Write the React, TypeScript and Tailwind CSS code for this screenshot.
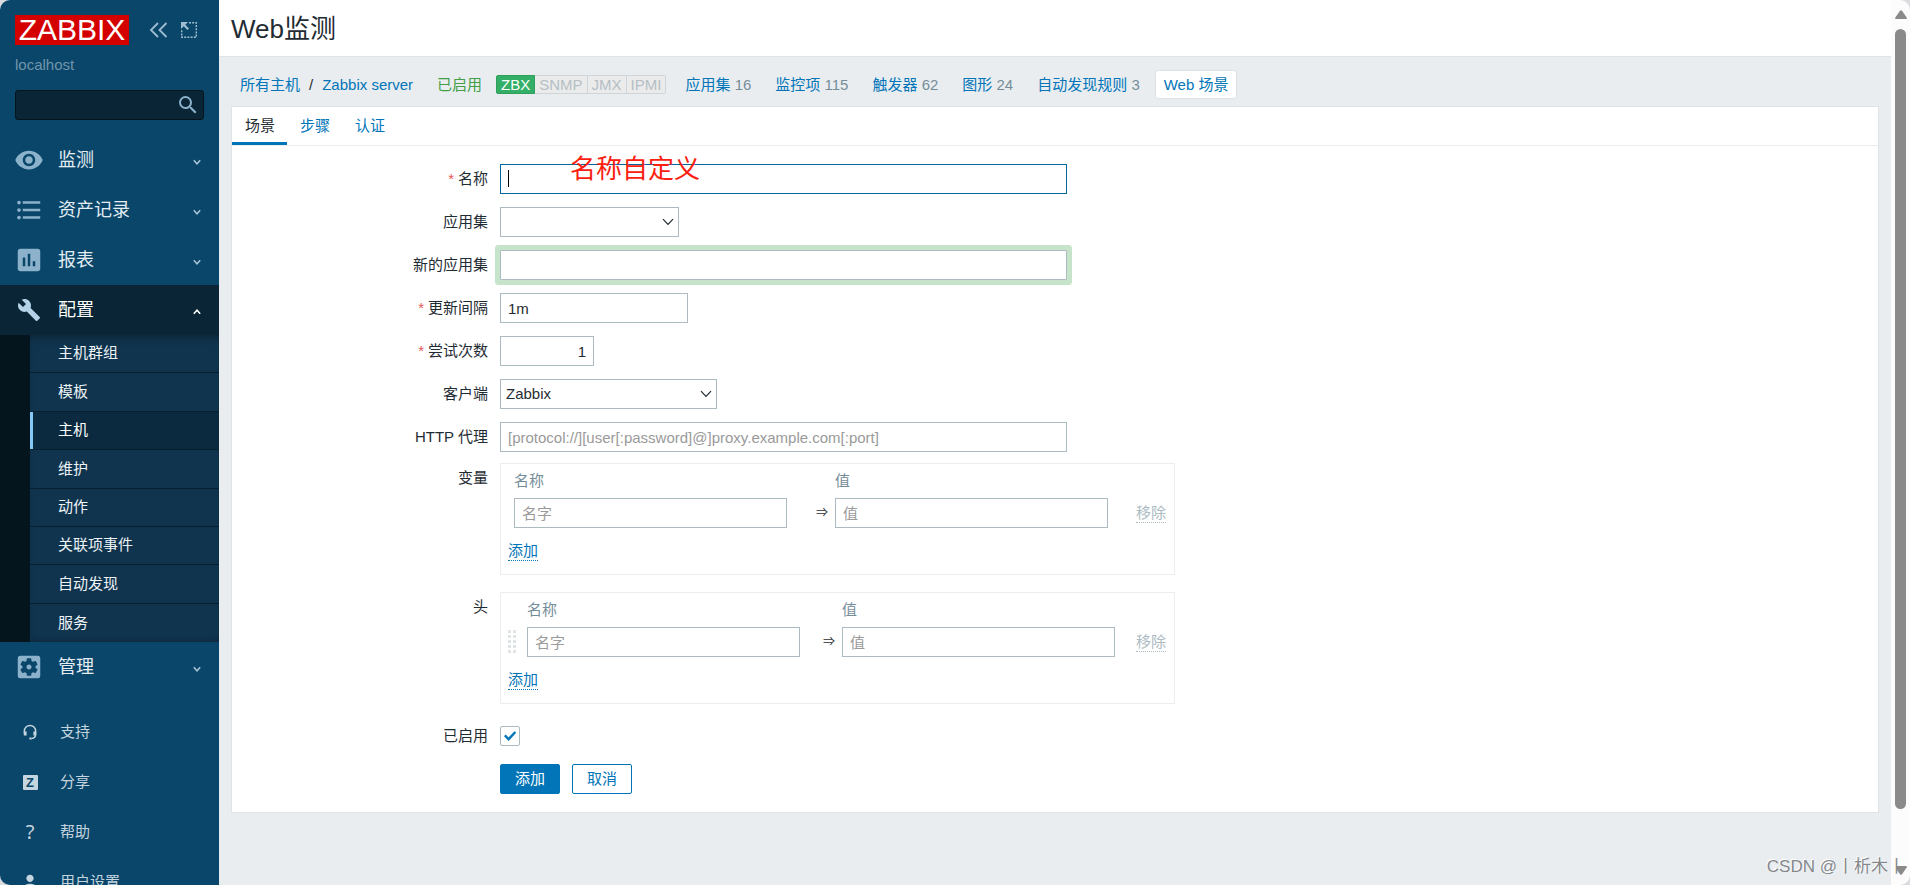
import React from "react";
import {
  MdBuild,
  MdFormatListBulleted,
  MdInsertChart,
  MdPerson,
  MdSearch,
  MdSettingsApplications,
  MdVisibility,
} from "react-icons/md";

const mainMenu = [
  { label: "监测", icon: MdVisibility },
  { label: "资产记录", icon: MdFormatListBulleted },
  { label: "报表", icon: MdInsertChart },
];

const configMenu = [
  "主机群组",
  "模板",
  "主机",
  "维护",
  "动作",
  "关联项事件",
  "自动发现",
  "服务",
];

const hostLinks = [
  { label: "应用集", count: 16 },
  { label: "监控项", count: 115 },
  { label: "触发器", count: 62 },
  { label: "图形", count: 24 },
  { label: "自动发现规则", count: 3 },
];

const inputClass =
  "block h-[30px] border border-[#acbbc2] bg-white px-[7px] text-[15px] text-[#1f2c33] outline-none placeholder:text-[#9a9a9a]";

const Chevron: React.FC<{ up?: boolean }> = ({ up }) => (
  <svg
    className={up ? "h-2 w-2 rotate-180" : "h-2 w-2"}
    viewBox="0 0 8 8"
    fill="none"
    stroke="currentColor"
    strokeWidth="1.5"
  >
    <path d="M0.8 2.2 4 5.8 7.2 2.2" />
  </svg>
);

const MenuItem: React.FC<{
  label: string;
  icon: React.ElementType;
  active?: boolean;
}> = ({ label, icon: Icon, active }) => (
  <a
    href="#"
    className={
      active
        ? "flex h-[50px] items-center bg-[#0a2636] pl-3.5 pr-[18px] text-white"
        : "flex h-[50px] items-center pl-3.5 pr-[18px] text-[#e3edf3]"
    }
  >
    <span className="flex w-[30px] justify-center">
      <Icon
        className={
          active ? "h-6 w-6 text-[#b5d3e8]" : "h-[30px] w-[30px] text-[#8cb2cb]"
        }
      />
    </span>
    <span className="ml-3.5 flex-1 text-[18px] leading-6">{label}</span>
    <span className={active ? "pt-1 text-white" : "pt-1 text-[#a9c5d6]"}>
      <Chevron up={active} />
    </span>
  </a>
);

const FooterItem: React.FC<{ label: string; children: React.ReactNode }> = ({
  label,
  children,
}) => (
  <a
    href="#"
    className="flex h-[50px] shrink-0 items-center text-[15px] text-[#c5d5df]"
  >
    <span className="flex w-[60px] justify-center text-[#c5d5df]">
      {children}
    </span>
    {label}
  </a>
);

const Sidebar: React.FC = () => (
  <aside className="flex w-[219px] shrink-0 flex-col overflow-hidden rounded-l-[10px] bg-[#0a466a]">
    <div className="flex shrink-0 items-center pl-[15px] pt-[15px]">
      <a
        href="#"
        className="flex h-[30px] w-[114px] items-center justify-center bg-[#d40000] text-[30px] leading-none text-white"
      >
        ZABBIX
      </a>
      <button className="ml-5 text-[#9fbdd0]" aria-label="收起">
        <svg
          className="h-[18px] w-5"
          viewBox="0 0 20 18"
          fill="none"
          stroke="currentColor"
          strokeWidth="1.8"
        >
          <path d="M9 2 2 9l7 7M17.5 2l-7 7 7 7" />
        </svg>
      </button>
      <button className="ml-[11px] text-[#9fbdd0]" aria-label="隐藏">
        <svg
          className="h-[18px] w-[18px]"
          viewBox="0 0 18 18"
          fill="none"
          stroke="currentColor"
        >
          <path
            d="M9 1.7h7.3v14.6H1.7V9"
            strokeWidth="1.4"
            strokeDasharray="2 1.2"
          />
          <path d="M1 1h7L1 8z" fill="currentColor" stroke="none" />
          <path d="M3 3l5.2 5.2" strokeWidth="2.2" />
        </svg>
      </button>
    </div>
    <div className="mt-2.5 shrink-0 pl-[15px] text-[15px] leading-5 text-[#7095ac]">
      localhost
    </div>
    <div className="mx-[15px] mt-[15px] flex h-[30px] shrink-0 items-center rounded-[3px] border border-[#04131c] bg-[#0a2636] pr-[3px]">
      <input
        type="text"
        aria-label="搜索"
        className="h-full min-w-0 flex-1 bg-transparent px-2 text-[15px] text-white outline-none"
      />
      <button aria-label="搜索" className="text-[#8cb2cb]">
        <MdSearch className="h-6 w-6" />
      </button>
    </div>
    <nav className="mt-[15px] shrink-0">
      {mainMenu.map((item) => (
        <MenuItem key={item.label} label={item.label} icon={item.icon} />
      ))}
      <MenuItem label="配置" icon={MdBuild} active />
      <div className="bg-[#04151e] pl-[30px]">
        <ul className="grid h-[307px] auto-rows-fr bg-[#10344e] shadow-[inset_0_8px_8px_-6px_rgba(0,0,0,0.35),inset_0_-6px_6px_-6px_rgba(0,0,0,0.35)]">
          {configMenu.map((label) => (
            <li
              key={label}
              className="border-b border-[#05202f] last:border-b-0"
            >
              <a
                href="#"
                className={
                  label === "主机"
                    ? "flex h-full items-center border-l-[3px] border-[#83c8f7] bg-[#0b2a3f] pl-[25px] text-[15px] text-white"
                    : "flex h-full items-center pl-7 text-[15px] text-[#edf3f7]"
                }
              >
                {label}
              </a>
            </li>
          ))}
        </ul>
      </div>
      <MenuItem label="管理" icon={MdSettingsApplications} />
    </nav>
    <div className="mt-[15px] shrink-0">
      <FooterItem label="支持">
        <svg
          className="h-4 w-4"
          viewBox="0 0 16 16"
          fill="none"
          stroke="currentColor"
        >
          <path
            d="M2.4 9.5V7a5.6 5.6 0 0 1 11.2 0v3.5q0 3.6-4 4"
            strokeWidth="1.5"
          />
          <path d="M3.2 7.4v4M12.8 7.4v4" strokeWidth="2.8" />
          <path d="M7.4 14.5h2.2" strokeWidth="2" />
        </svg>
      </FooterItem>
      <FooterItem label="分享">
        <span className="h-[15px] w-[15px] rounded-[1px] bg-[#c5d5df] text-center text-[13px] font-bold leading-[15px] text-[#0a466a]">
          Z
        </span>
      </FooterItem>
      <FooterItem label="帮助">
        <span className="font-['Noto_Sans',sans-serif] text-[20px] leading-5">
          ?
        </span>
      </FooterItem>
      <FooterItem label="用户设置">
        <MdPerson className="h-[22px] w-[22px]" />
      </FooterItem>
    </div>
  </aside>
);

const HostNav: React.FC = () => (
  <nav className="flex h-[49px] items-center gap-2 px-[21px] pt-1.5 text-[15px] leading-[27px] text-[#0275b8]">
    <div className="flex">
      <a href="#">所有主机</a>
      <span className="px-[9px] text-[#1f2c33]">/</span>
      <a href="#">Zabbix server</a>
    </div>
    <span className="ml-4 text-[#429e47]">已启用</span>
    <div className="ml-1.5 flex leading-[17px] text-[#b4bfc5]">
      <span className="rounded-l-[2px] border border-[#2f9f5e] bg-[#34af67] px-1 text-white">
        ZBX
      </span>
      <span className="border-y border-r border-[#ccd5d9] bg-[#ebebeb] px-1">
        SNMP
      </span>
      <span className="border-y border-r border-[#ccd5d9] bg-[#ebebeb] px-1">
        JMX
      </span>
      <span className="rounded-r-[2px] border-y border-r border-[#ccd5d9] bg-[#ebebeb] px-1">
        IPMI
      </span>
    </div>
    <ul className="ml-[3px] flex gap-2">
      {hostLinks.map((link) => (
        <li key={link.label} className="px-2">
          <a href="#">{link.label}</a>{" "}
          <span className="text-[#768d99]">{link.count}</span>
        </li>
      ))}
      <li className="rounded-[2px] bg-white px-2 shadow-[0_0_2px_rgba(0,0,0,0.15)]">
        <a href="#">Web 场景</a>
      </li>
    </ul>
  </nav>
);

const Row: React.FC<{
  label: string;
  htmlFor?: string;
  required?: boolean;
  children: React.ReactNode;
}> = ({ label, htmlFor, required, children }) => (
  <div className="grid grid-cols-[256px_1fr] gap-x-3">
    <label htmlFor={htmlFor} className="text-right leading-[30px]">
      {required && <span className="mr-1 text-[#e45959]">*</span>}
      {label}
    </label>
    <div>{children}</div>
  </div>
);

const Select: React.FC<{ id: string; width: string; options: string[] }> = ({
  id,
  width,
  options,
}) => (
  <div className={`relative ${width}`}>
    <select
      id={id}
      className="block h-[30px] w-full appearance-none border border-[#acbbc2] bg-white px-[5px] text-[15px] text-[#1f2c33] outline-none"
    >
      {options.map((o) => (
        <option key={o}>{o}</option>
      ))}
    </select>
    <svg
      className="pointer-events-none absolute right-[5px] top-[11px] h-2 w-3"
      viewBox="0 0 12 8"
      fill="none"
      stroke="#1f2c33"
      strokeWidth="1.2"
    >
      <path d="M1 1.2 6 6.4 11 1.2" />
    </svg>
  </div>
);

const PairTable: React.FC<{ name: string; sortable?: boolean }> = ({
  name,
  sortable,
}) => (
  <div className="w-[675px] border border-[#ebeef0] px-[7px] pb-[13px] pt-[3px]">
    <table className="w-full table-fixed">
      <thead>
        <tr className="h-7 text-left text-[#768d99]">
          {sortable && <th className="w-[19px]" />}
          <th
            className={
              sortable ? "w-[273px] font-normal" : "w-[279px] pl-1.5 font-normal"
            }
          >
            名称
          </th>
          <th className={sortable ? "w-[42px]" : "w-12"} />
          <th className="w-[273px] font-normal">值</th>
          <th />
        </tr>
      </thead>
      <tbody>
        <tr>
          {sortable && (
            <td>
              <svg className="h-6 w-2" viewBox="0 0 8 24" fill="#dfe4e7">
                {[0, 5, 10, 15, 20].map((y) => (
                  <g key={y}>
                    <rect x="0" y={y} width="3" height="3" />
                    <rect x="5" y={y} width="3" height="3" />
                  </g>
                ))}
              </svg>
            </td>
          )}
          <td className={sortable ? "py-[3px]" : "py-[3px] pl-1.5"}>
            <input
              type="text"
              aria-label={`${name} 名称`}
              placeholder="名字"
              className={`${inputClass} w-full`}
            />
          </td>
          <td className="pr-[7px] text-right text-[12px]">⇒</td>
          <td className="py-[3px]">
            <input
              type="text"
              aria-label={`${name} 值`}
              placeholder="值"
              className={`${inputClass} w-full`}
            />
          </td>
          <td className="pr-px text-right">
            <button
              disabled
              className="border-b border-dotted border-[#acbbc2] leading-[18px] text-[#acbbc2]"
            >
              移除
            </button>
          </td>
        </tr>
      </tbody>
    </table>
    <button className="mt-[11px] block border-b border-dotted border-[#0275b8] leading-[18px] text-[#0275b8]">
      添加
    </button>
  </div>
);

const ScenarioForm: React.FC = () => (
  <form className="pb-[18px] pt-[18px]" onSubmit={(e) => e.preventDefault()}>
    <div className="flex flex-col gap-[13px]">
      <Row label="名称" htmlFor="name" required>
        <div className="relative w-[567px]">
          <input
            id="name"
            type="text"
            className="block h-[30px] w-full border border-[#04659f] bg-white px-[7px] text-[15px] outline-none"
          />
          <span className="absolute left-2 top-1.5 h-[17px] w-px bg-black" />
          <span className="pointer-events-none absolute -top-2.5 left-[70px] text-[26px] leading-[30px] text-[#fb2010]">
            名称自定义
          </span>
        </div>
      </Row>
      <Row label="应用集" htmlFor="application">
        <Select id="application" width="w-[179px]" options={[""]} />
      </Row>
      <Row label="新的应用集" htmlFor="new-application">
        <input
          id="new-application"
          type="text"
          className={`${inputClass} w-[567px] rounded-[1px] shadow-[0_0_0_5px_#c6e4c9]`}
        />
      </Row>
      <Row label="更新间隔" htmlFor="delay" required>
        <input
          id="delay"
          type="text"
          defaultValue="1m"
          className={`${inputClass} w-[188px]`}
        />
      </Row>
      <Row label="尝试次数" htmlFor="retries" required>
        <input
          id="retries"
          type="text"
          defaultValue="1"
          className={`${inputClass} w-[94px] text-right`}
        />
      </Row>
      <Row label="客户端" htmlFor="agent">
        <Select id="agent" width="w-[217px]" options={["Zabbix"]} />
      </Row>
      <Row label="HTTP 代理" htmlFor="http-proxy">
        <input
          id="http-proxy"
          type="text"
          placeholder="[protocol://][user[:password]@]proxy.example.com[:port]"
          className={`${inputClass} w-[567px]`}
        />
      </Row>
    </div>
    <div className="mt-[11px] flex flex-col gap-[17px]">
      <Row label="变量">
        <PairTable name="变量" />
      </Row>
      <Row label="头">
        <PairTable name="头" sortable />
      </Row>
      <Row label="已启用" htmlFor="status">
        <div className="relative flex h-[30px] w-5 items-center">
          <input
            id="status"
            type="checkbox"
            defaultChecked
            className="peer h-5 w-5 appearance-none rounded-[2px] border border-[#acbbc2] bg-white"
          />
          <svg
            className="pointer-events-none absolute left-1 top-[10px] hidden h-[10px] w-3 peer-checked:block"
            viewBox="0 0 12 10"
            fill="none"
            stroke="#0275b8"
            strokeWidth="2.4"
          >
            <path d="M0.8 4.4 4.6 8.2 11.4 1" />
          </svg>
        </div>
      </Row>
    </div>
    <div className="mt-[13px] flex gap-3 pl-[268px]">
      <button className="h-[30px] w-[60px] rounded-[2px] border border-[#0275b8] bg-[#0275b8] text-white">
        添加
      </button>
      <button className="h-[30px] w-[60px] rounded-[2px] border border-[#0275b8] bg-white text-[#0275b8]">
        取消
      </button>
    </div>
  </form>
);

const Scrollbar: React.FC = () => (
  <div className="flex w-[19px] shrink-0 flex-col items-center rounded-r-[10px] bg-[#fcfcfc] py-2.5">
    <svg className="h-[9px] w-3" viewBox="0 0 12 9" fill="#8a8a8a">
      <path d="M5 .8Q6-.4 7 .8L11.8 7.8Q12 9 11 9H1Q0 9 .2 7.8z" />
    </svg>
    <div className="mb-[57px] mt-2.5 w-[11px] flex-1 rounded-full bg-[#8a8a8a]" />
    <svg className="h-[9px] w-3 rotate-180" viewBox="0 0 12 9" fill="#8a8a8a">
      <path d="M5 .8Q6-.4 7 .8L11.8 7.8Q12 9 11 9H1Q0 9 .2 7.8z" />
    </svg>
  </div>
);

const App: React.FC = () => {
  return (
    <div className="relative flex h-screen overflow-hidden bg-[#d9dbde] font-['Liberation_Sans','Noto_Sans_CJK_SC',sans-serif] text-[15px] text-[#1f2c33]">
      <Sidebar />
      <main className="min-w-0 flex-1 bg-[#e9edf0]">
        <header className="border-b border-[#dfe4e7] bg-white px-3 pb-[9px] pt-[11px]">
          <h1 className="text-[26px] leading-9">Web监测</h1>
        </header>
        <HostNav />
        <section className="mx-3 border border-[#dfe4e7] bg-white">
          <div className="flex h-[39px] border-b border-[#ebeef0] text-[#0275b8]">
            <button className="border-b-[3px] border-[#0275b8] pl-[13px] pr-3 pt-[3px] text-[#1f2c33]">
              场景
            </button>
            <button className="pl-[13px] pr-3">步骤</button>
            <button className="pl-[13px] pr-3">认证</button>
          </div>
          <ScenarioForm />
        </section>
      </main>
      <Scrollbar />
      <div className="pointer-events-none absolute bottom-1.5 right-[5px] text-[17px] leading-6 text-[#85888b] [text-shadow:-1px_-1px_0_#fff]">
        CSDN @丨析木丨
      </div>
    </div>
  );
};

export default App;
